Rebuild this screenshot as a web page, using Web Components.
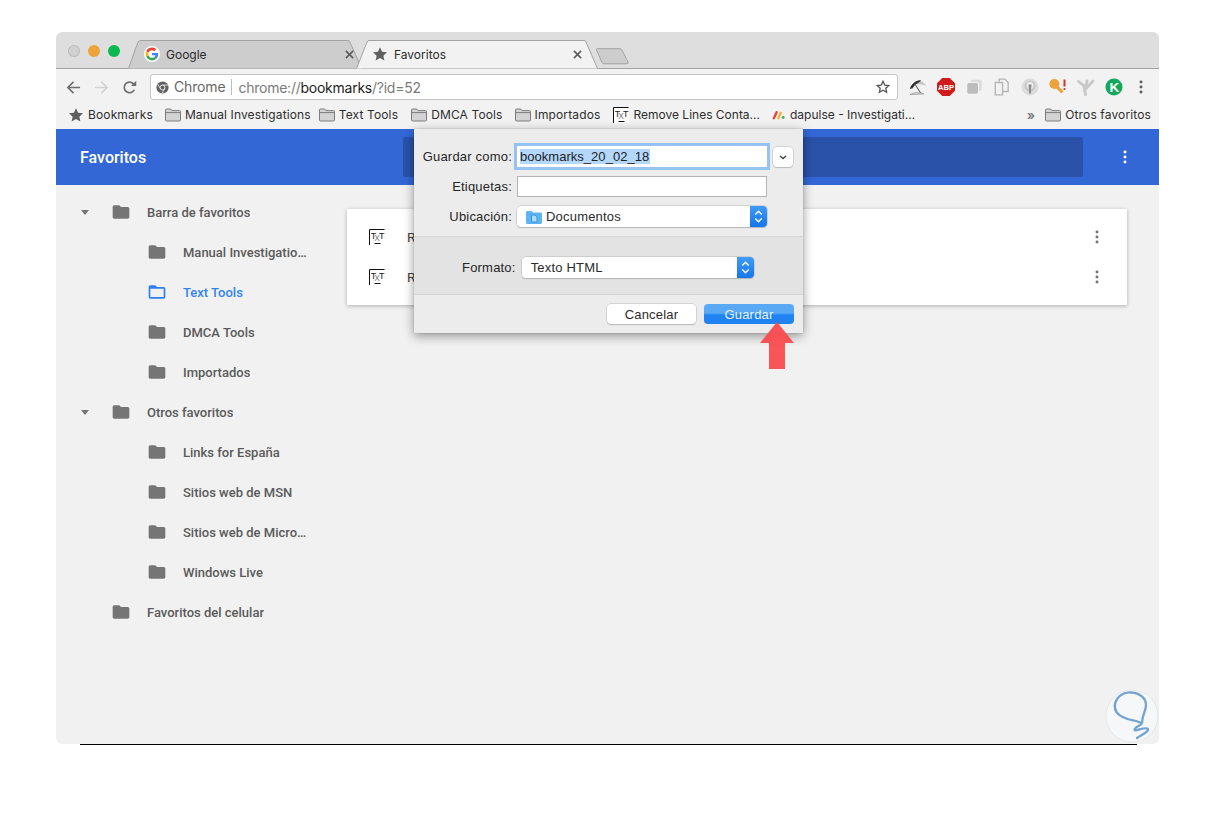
<!DOCTYPE html>
<html lang="es">
<head>
<meta charset="utf-8">
<title>Favoritos</title>
<style>
  html, body { margin: 0; background: #fff; }
  body { padding: 32px 56px 0; font-family: "Liberation Sans", sans-serif; }
</style>
</head>
<body>
<browser-window></browser-window>

<script>
const ICONS = {
    google: `<svg viewBox="-6 -6 60 60"><circle cx="24" cy="24" r="30" fill="#fff"/><path fill="#EA4335" d="M24 9.5c3.54 0 6.71 1.22 9.21 3.6l6.85-6.85C35.9 2.38 30.47 0 24 0 14.62 0 6.51 5.38 2.56 13.22l7.98 6.19C12.43 13.72 17.74 9.5 24 9.5z"/><path fill="#4285F4" d="M46.98 24.55c0-1.57-.15-3.09-.38-4.55H24v9.02h12.94c-.58 2.96-2.26 5.48-4.78 7.18l7.73 6c4.51-4.18 7.09-10.36 7.09-17.65z"/><path fill="#FBBC05" d="M10.53 28.59c-.48-1.45-.76-2.99-.76-4.59s.27-3.14.76-4.59l-7.98-6.19C.92 16.46 0 20.12 0 24c0 3.88.92 7.54 2.56 10.78l7.97-6.19z"/><path fill="#34A853" d="M24 48c6.48 0 11.93-2.13 15.89-5.81l-7.73-6c-2.15 1.45-4.92 2.3-8.16 2.3-6.26 0-11.57-4.22-13.47-9.91l-7.98 6.19C6.51 42.62 14.62 48 24 48z"/></svg>`,
    star: `<svg viewBox="0 0 24 24"><path fill="#5f5f5f" d="M12 1.8l3.1 6.9 7.4.8-5.5 5 1.6 7.4L12 18.1l-6.6 3.8L7 14.5l-5.5-5 7.4-.8z"/></svg>`,
    starOutline: `<svg viewBox="0 0 24 24"><path fill="none" stroke="#555" stroke-width="2" d="M12 3.5l2.6 5.6 6.1.7-4.5 4.1 1.2 6L12 16.9l-5.4 3 1.2-6-4.5-4.1 6.1-.7z"/></svg>`,
    close: `<svg viewBox="0 0 10 10"><path stroke="#5a5a5a" stroke-width="1.7" d="M1 1l8 8M9 1l-8 8"/></svg>`,
    back: `<svg viewBox="0 0 16 16"><path fill="none" stroke="#6e6e6e" stroke-width="1.7" d="M15 8H2M8 2L2 8l6 6"/></svg>`,
    forward: `<svg viewBox="0 0 16 16"><path fill="none" stroke="#d2d2d2" stroke-width="1.7" d="M1 8h13M8 2l6 6-6 6"/></svg>`,
    reload: `<svg viewBox="0 0 16 16"><path fill="none" stroke="#6e6e6e" stroke-width="1.8" d="M13.2 10.4A5.7 5.7 0 1 1 12.6 4.4"/><path fill="#6e6e6e" d="M9.6 6.4h5.6V.8z"/></svg>`,
    chrome: `<svg viewBox="0 0 16 16"><circle cx="8" cy="8" r="7.500" fill="#616161"/><circle cx="8" cy="8" r="3" fill="#616161" stroke="#f4f4f4" stroke-width="1.1"/><path stroke="#f4f4f4" stroke-width="1" d="M8 5h6.800M5.400 9.500L2 3.800M10.600 9.500l-3.400 6"/></svg>`,
    barFolder: `<svg viewBox="0 0 16 14"><path fill="#d3d3d3" stroke="#7c7c7c" d="M.5 12V2c0-.6.4-1 1-1h4.2l1.3 1.6h7.5c.6 0 1 .4 1 1V12c0 .6-.4 1-1 1h-13c-.6 0-1-.4-1-1z"/><path stroke="#7c7c7c" d="M.8 4.6h14.4"/></svg>`,
    txt: `<svg viewBox="0 0 16 16"><rect width="16" height="16" fill="#fff"/><path fill="none" stroke="#111" d="M.5 16V.5h15M5.500 14.500h6"/><text x="1.800" y="9.500" font-family="Liberation Sans" font-size="9" fill="#222">T</text><text x="5.200" y="12" font-family="Liberation Sans" font-size="8.500" fill="#777">X</text><text x="10" y="9.500" font-family="Liberation Sans" font-size="9" fill="#222">T</text></svg>`,
    dapulse: `<svg viewBox="0 0 14 10"><path stroke="#e8413f" stroke-width="2.600" stroke-linecap="round" d="M2 8.400L5 2"/><path stroke="#f2b632" stroke-width="2.600" stroke-linecap="round" d="M6.800 8.400L9.400 2.600"/><circle cx="12" cy="7.800" r="1.600" fill="#4fa968"/></svg>`,
    umbrella: `<svg viewBox="0 0 18 18"><path fill="#c4c4c4" d="M7 3.500l4-1.500 6.500 5.500C14 6.500 10 6.500 7 6z"/><path fill="#2f2f2f" d="M.8 11C2 6 7.500 1.500 12 2.200 11 4 8.500 5 6.800 6.500 5 8 4 9.500 3.400 10.500 2.600 10.300 1.600 10.500.8 11z"/><path stroke="#666" stroke-width="1.100" d="M6.500 7l5.500 8.500"/><path fill="#d8d8d8" stroke="#888" stroke-width=".6" d="M1 16.500c3-2 10-2.600 14-.5z"/></svg>`,
    abp: `<svg viewBox="0 0 18 18"><path fill="#d01b1b" d="M5.300 0h7.400L18 5.300v7.400L12.700 18H5.300L0 12.700V5.300z"/><text x="9" y="12" text-anchor="middle" font-family="Liberation Sans" font-weight="700" font-size="7.600" fill="#fff">ABP</text></svg>`,
    stack: `<svg viewBox="0 0 16 16"><rect x="5" y="1.500" width="10" height="10" rx="2" fill="#dcdcdc"/><rect x="1.500" y="4" width="10.500" height="10.500" rx="2" fill="#bcbcbc" stroke="#f2f2f2"/></svg>`,
    copy: `<svg viewBox="0 0 16 16"><path fill="#f2f2f2" stroke="#b5b5b5" stroke-width="1.200" d="M5.500 1h5l3 3v8h-8z"/><path fill="#f2f2f2" stroke="#b5b5b5" stroke-width="1.200" d="M2 4h6.500v11H2z"/></svg>`,
    bulb: `<svg viewBox="0 0 18 18"><circle cx="9" cy="9" r="8.500" fill="#dcdcdc"/><circle cx="9" cy="8" r="5.600" fill="#c8c8c8"/><circle cx="9" cy="7.500" r="3.400" fill="#eee"/><path fill="#8c8c8c" d="M7.400 6.500h3.200l-.6 5.500v3.500H8V12z"/></svg>`,
    key: `<svg viewBox="0 0 18 18"><circle cx="5.400" cy="6" r="5" fill="#eda33b"/><path stroke="#eda33b" stroke-width="3" d="M7 8l6.400 6.400M11 13l1.800-1.800"/><path stroke="#d8322c" stroke-width="2" d="M15.500 1.500v7"/><circle cx="15.500" cy="11" r="1.100" fill="#d8322c"/></svg>`,
    tree: `<svg viewBox="0 0 18 18"><path fill="none" stroke="#c9c9c9" stroke-width="2.900" stroke-linecap="round" d="M1.500 3.500L7 8l1.500 8.500M8.500 9c1-2 1-3.500 1.500-6M9 10.500L16 3"/></svg>`,
    kcircle: `<svg viewBox="0 0 18 18"><circle cx="9" cy="9" r="8.500" fill="#12a85c"/><text x="9.400" y="14" text-anchor="middle" font-family="Liberation Sans" font-weight="700" font-size="13.500" fill="#fff">K</text></svg>`,
    dots: `<svg viewBox="0 0 4 16"><circle cx="2" cy="2.200" r="1.700"/><circle cx="2" cy="8" r="1.700"/><circle cx="2" cy="13.800" r="1.700"/></svg>`,
    folderSolid: `<svg viewBox="0 0 24 24"><path fill="#757575" d="M10 4H4c-1.100 0-2 .9-2 2v12c0 1.100.9 2 2 2h16c1.100 0 2-.9 2-2V8c0-1.100-.9-2-2-2h-8l-2-2z"/></svg>`,
    folderOpen: `<svg viewBox="0 0 24 24"><path fill="#2f80ed" d="M20 6h-8l-2-2H4c-1.100 0-1.990.9-1.990 2L2 18c0 1.100.9 2 2 2h16c1.100 0 2-.9 2-2V8c0-1.100-.9-2-2-2zm0 12H4V8h16v10z"/></svg>`,
    docFolder: `<svg viewBox="0 0 16 14"><path fill="#5cb4f2" d="M0 2.500C0 1.600.6 1 1.500 1h4l1.500 1.500h7.500c.9 0 1.500.6 1.500 1.500v8.500c0 .9-.6 1.500-1.500 1.500h-13C.6 14 0 13.400 0 12.500z"/><path fill="#a8dbfa" stroke="#2f86d0" stroke-width=".8" d="M5.500 5h3.500l2 2v5H5.500z"/></svg>`
};

class AppIcon extends HTMLElement {
    connectedCallback() {
        const size = this.getAttribute('size') || 16;
        const height = this.getAttribute('height') || size;
        this.attachShadow({ mode: 'open' }).innerHTML = `
            <style>
                :host { display: inline-flex; flex: none; width: ${size}px; height: ${height}px; }
                svg { width: 100%; height: 100%; display: block; fill: currentColor; }
            </style>
            ${ICONS[this.getAttribute('name')]}
        `;
    }
}
customElements.define('app-icon', AppIcon);

class ChromeTab extends HTMLElement {
    connectedCallback() {
        const active = this.hasAttribute('active');
        const w = this.getAttribute('width');
        this.attachShadow({ mode: 'open' }).innerHTML = `
            <style>
                :host {
                    display: flex; align-items: center; flex: none; position: relative;
                    width: ${w}px; height: 28px; box-sizing: border-box; padding: 0 ${active ? 16 : 8}px 0 ${active ? 16 : 16}px;
                    font: 12px Inter, sans-serif; color: #2c2c2c; z-index: ${active ? 2 : 1};
                }
                svg.shape { position: absolute; left: 0; top: 0; width: 100%; height: 29px; }
                app-icon, span { position: relative; }
                span { flex: 1; margin-left: 6px; }
            </style>
            <svg class="shape" viewBox="0 0 ${w} 29" preserveAspectRatio="none">
                <path fill="${active ? '#f2f2f2' : '#cdcdcd'}" stroke="#a3a3a3" d="M0.500 28.500 L${active ? 11 : 10} 2 Q${active ? 11.500 : 10.500} 0.500 13 0.500 H${w - 14} Q${w - 12.500} 0.500 ${w - 12} 2 L${w - 0.500} 28.500"/>
            </svg>
            <app-icon name="${this.getAttribute('icon')}" size="16"></app-icon>
            <span><slot></slot></span>
            <app-icon name="close" size="9"></app-icon>
        `;
    }
}
customElements.define('chrome-tab', ChromeTab);

class TabStrip extends HTMLElement {
    connectedCallback() {
        this.attachShadow({ mode: 'open' }).innerHTML = `
            <style>
                :host {
                    display: flex; height: 37px; box-sizing: border-box; padding: 8px 0 0 72px;
                    background: #dedede; border-bottom: 1px solid #a3a3a3; border-radius: 6px 6px 0 0;
                }
                .lights { display: flex; gap: 8px; position: absolute; margin: 5px 0 0 -60px; }
                .lights i { width: 12px; height: 12px; border-radius: 50%; }
                chrome-tab + chrome-tab { margin-left: -6px; }
                .new { flex: none; width: 34px; height: 17px; margin: 8px 0 0 -3px; z-index: 0; }
                .new svg { display: block; width: 100%; height: 100%; }
            </style>
            <div class="lights">
                <i style="background:#d0d0d0;box-shadow:inset 0 0 0 1px #bdbdbd"></i>
                <i style="background:#eda339"></i>
                <i style="background:#0cb84f"></i>
            </div>
            <chrome-tab width="234" icon="google">Google</chrome-tab>
            <chrome-tab width="242" icon="star" active>Favoritos</chrome-tab>
            <div class="new"><svg viewBox="0 0 34 17"><path fill="#cdcdcd" stroke="#a3a3a3" d="M1.500 2 Q1 .7 2.500 .7 H25 Q26.200 .7 27 2 L33 14 Q33.500 15.800 32 15.800 H9 Q7.700 15.800 7 14.500 z"/></svg></div>
        `;
    }
}
customElements.define('tab-strip', TabStrip);

class OmniBox extends HTMLElement {
    connectedCallback() {
        this.attachShadow({ mode: 'open' }).innerHTML = `
            <style>
                :host {
                    display: flex; align-items: center; flex: none; box-sizing: border-box;
                    width: 748px; height: 26px; padding: 0 6px 0 5px; background: #fff;
                    border: 1px solid #c6c6c6; border-radius: 3px;
                    font: 14px Inter, sans-serif; letter-spacing: -.15px; color: #7a7a7a;
                }
                .chip { margin-left: 5px; padding-right: 6px; border-right: 1px solid #bdbdbd; line-height: 16px; color: #666; }
                .url { margin-left: 6px; flex: 1; white-space: nowrap; letter-spacing: -.25px; }
                b { font-weight: 400; color: #1d1d1d; }
            </style>
            <app-icon name="chrome" size="13"></app-icon>
            <span class="chip">Chrome</span>
            <span class="url">chrome://<b>bookmarks</b>/?id=52</span>
            <app-icon name="starOutline" size="16"></app-icon>
        `;
    }
}
customElements.define('omni-box', OmniBox);

class BrowserToolbar extends HTMLElement {
    connectedCallback() {
        const ext = ['umbrella', 'abp', 'stack', 'copy', 'bulb', 'key', 'tree', 'kcircle'];
        this.attachShadow({ mode: 'open' }).innerHTML = `
            <style>
                :host { display: flex; align-items: center; height: 32px; box-sizing: border-box; padding: 4px 0 0 10px; background: #f2f2f2; }
                .nav { display: flex; gap: 13px; width: 84px; flex: none; align-items: center; }
                .ext { display: flex; gap: 10px; margin-left: 11px; align-items: center; }
                .menu { margin-left: 16px; color: #5c5c5c; }
            </style>
            <div class="nav">
                <app-icon name="back" size="15"></app-icon>
                <app-icon name="forward" size="15"></app-icon>
                <app-icon name="reload" size="15"></app-icon>
            </div>
            <omni-box></omni-box>
            <div class="ext">${ext.map(n => `<app-icon name="${n}" size="18"></app-icon>`).join('')}</div>
            <app-icon class="menu" name="dots" size="4" height="14"></app-icon>
        `;
    }
}
customElements.define('browser-toolbar', BrowserToolbar);

class BmItem extends HTMLElement {
    connectedCallback() {
        const icon = this.getAttribute('icon') || 'barFolder';
        const h = this.getAttribute('icon-h') || 14;
        const w = this.getAttribute('icon-w') || 16;
        const gap = this.getAttribute('gap') || 4;
        this.attachShadow({ mode: 'open' }).innerHTML = `
            <style>
                :host { display: inline-flex; align-items: center; flex: none; gap: ${gap}px; white-space: nowrap; }
            </style>
            <app-icon name="${icon}" size="${w}" height="${h}"></app-icon>
            <slot></slot>
        `;
    }
}
customElements.define('bm-item', BmItem);

class BookmarksBar extends HTMLElement {
    connectedCallback() {
        this.attachShadow({ mode: 'open' }).innerHTML = `
            <style>
                :host {
                    display: flex; align-items: center; height: 28px; box-sizing: border-box; padding: 0 8px 1px 12px;
                    background: #f2f2f2; font: 12px Inter, sans-serif; letter-spacing: .13px; color: #2e2e2e;
                }
                .list { display: flex; align-items: center; gap: 12px; flex: 1; }
                .tight { margin-right: -4px; }
                .wide { margin-right: 13px; }
                .narrow { letter-spacing: 0; }
                .more { color: #777; margin-right: 10px; font-size: 13px; font-weight: 600; }
            </style>
            <div class="list">
                <bm-item icon="star" icon-w="16" icon-h="16">Bookmarks</bm-item>
                <bm-item class="tight">Manual Investigations</bm-item>
                <bm-item style="margin-right:1px">Text Tools</bm-item>
                <bm-item>DMCA Tools</bm-item>
                <bm-item style="margin-right:1px">Importados</bm-item>
                <bm-item class="narrow" icon="txt" icon-w="16" icon-h="16">Remove Lines Conta…</bm-item>
                <bm-item class="narrow" icon="dapulse" icon-w="13" icon-h="10" gap="5">dapulse - Investigati…</bm-item>
            </div>
            <span class="more">»</span>
            <bm-item>Otros favoritos</bm-item>
        `;
    }
}
customElements.define('bookmarks-bar', BookmarksBar);

class AppHeader extends HTMLElement {
    connectedCallback() {
        this.attachShadow({ mode: 'open' }).innerHTML = `
            <style>
                :host {
                    display: flex; align-items: center; height: 56px; flex: none;
                    background: #3367d6; color: #fff; font: 500 16px Roboto, sans-serif;
                }
                .title { width: 347px; padding-left: 24px; box-sizing: border-box; flex: none; }
                .search { width: 680px; height: 40px; background: #2a52a9; border-radius: 2px; flex: none; }
                app-icon { margin-left: 40px; }
            </style>
            <div class="title">Favoritos</div>
            <div class="search"></div>
            <app-icon name="dots" size="4" height="14"></app-icon>
        `;
    }
}
customElements.define('app-header', AppHeader);

class TreeRow extends HTMLElement {
    connectedCallback() {
        const depth = Number(this.getAttribute('depth') || 0);
        const selected = this.hasAttribute('selected');
        const open = this.hasAttribute('open');
        this.attachShadow({ mode: 'open' }).innerHTML = `
            <style>
                :host {
                    display: flex; align-items: center; height: 40px; box-sizing: border-box;
                    padding-left: ${20 + depth * 36}px; font: 500 13px Roboto, sans-serif;
                    color: ${selected ? '#3384f0' : '#5a5a5a'};
                }
                .arrow { width: 18px; margin-right: 17px; flex: none; display: flex; justify-content: center; }
                .arrow i { width: 0; height: 0; border: 4.500px solid transparent; border-top: 5px solid #757575; border-bottom: 0; visibility: ${open ? 'visible' : 'hidden'}; }
                .label { margin-left: 16px; max-width: 124px; overflow: hidden; white-space: nowrap; text-overflow: ellipsis; }
            </style>
            <div class="arrow"><i></i></div>
            <app-icon name="${selected ? 'folderOpen' : 'folderSolid'}" size="20"></app-icon>
            <div class="label"><slot></slot></div>
        `;
    }
}
customElements.define('tree-row', TreeRow);

class BookmarkCard extends HTMLElement {
    connectedCallback() {
        const row = `
            <div class="row">
                <app-icon name="txt" size="16"></app-icon>
                <span class="name">Remove</span>
                <app-icon class="menu" name="dots" size="4" height="14"></app-icon>
            </div>`;
        this.attachShadow({ mode: 'open' }).innerHTML = `
            <style>
                :host {
                    display: block; width: 780px; box-sizing: border-box; padding: 8px 0;
                    background: #fff; box-shadow: 0 1px 4px rgba(0,0,0,.28);
                    font: 13.5px Roboto, sans-serif; color: #444;
                }
                .row { display: flex; align-items: center; height: 40px; padding: 0 28px 0 22px; }
                .name { margin-left: 22px; flex: 1; }
                .menu { color: #757575; }
            </style>
            ${row}${row}
        `;
    }
}
customElements.define('bookmark-card', BookmarkCard);

class MacSelect extends HTMLElement {
    connectedCallback() {
        const w = this.getAttribute('width');
        const icon = this.getAttribute('icon');
        this.attachShadow({ mode: 'open' }).innerHTML = `
            <style>
                :host {
                    display: flex; align-items: center; box-sizing: border-box; flex: none; overflow: hidden;
                    width: ${w}px; height: 21px; background: #fff; border-radius: 4px;
                    box-shadow: 0 0 0 .5px #b8b8b8, 0 1px 1px rgba(0,0,0,.22);
                    font: 13px "Liberation Sans", sans-serif; color: #2b2b2b; letter-spacing: .2px;
                }
                .text { flex: 1; padding-left: ${icon ? 4 : 9}px; white-space: nowrap; }
                app-icon { margin-left: 9px; }
                .step { width: 17px; height: 100%; background: linear-gradient(#3f9bf7, #1676ea); flex: none; }
                .step svg { display: block; width: 100%; height: 100%; }
            </style>
            ${icon ? `<app-icon name="${icon}" size="16" height="14"></app-icon>` : ''}
            <span class="text"><slot></slot></span>
            <div class="step"><svg viewBox="0 0 17 21"><path fill="none" stroke="#fff" stroke-width="1.400" d="M5.300 8.500L8.500 5.300l3.200 3.200M5.300 12.500l3.200 3.200 3.200-3.200"/></svg></div>
        `;
    }
}
customElements.define('mac-select', MacSelect);

class MacButton extends HTMLElement {
    connectedCallback() {
        const primary = this.hasAttribute('primary');
        this.attachShadow({ mode: 'open' }).innerHTML = `
            <style>
                :host {
                    display: flex; align-items: center; justify-content: center; flex: none;
                    width: ${primary ? 90 : 89}px; height: 20px; border-radius: 4px; font: 13px "Liberation Sans", sans-serif; letter-spacing: .2px;
                    background: ${primary ? 'linear-gradient(#5aa9f5 0, #5aa9f5 45%, #1f84f2 55%, #1f84f2 100%)' : '#fff'};
                    color: ${primary ? '#e8f2fd' : '#2b2b2b'};
                    box-shadow: ${primary ? 'none' : '0 0 0 .5px #bcbcbc, 0 1px 1px rgba(0,0,0,.2)'};
                }
            </style>
            <slot></slot>
        `;
    }
}
customElements.define('mac-button', MacButton);

class SaveDialog extends HTMLElement {
    connectedCallback() {
        this.attachShadow({ mode: 'open' }).innerHTML = `
            <style>
                :host {
                    display: block; position: absolute; left: 358px; top: 97px; width: 389px; height: 204px;
                    background: #ececec; box-shadow: 0 3px 10px rgba(0,0,0,.4), 0 0 1px rgba(0,0,0,.3);
                    font: 13px "Liberation Sans", sans-serif; color: #262626; letter-spacing: .2px; z-index: 5;
                }
                .top { height: 108px; box-sizing: border-box; padding-top: 17px; border-bottom: 1px solid #d6d6d6; }
                .row { display: flex; align-items: center; margin-bottom: 9px; }
                .row label { width: 98px; text-align: right; margin-right: 5px; flex: none; white-space: nowrap; }
                .name {
                    box-sizing: border-box; width: 250px; height: 21px; padding-left: 3px; background: #fff; flex: none; line-height: 21px;
                    box-shadow: 0 0 0 .5px #9cc2ee, 0 0 0 3px #93c2f4; color: #222; letter-spacing: .03px;
                }
                .name span { background: #b3d7fd; padding-right: 1px; }
                .plain { box-sizing: border-box; width: 250px; height: 21px; background: #fff; border: 1px solid #b4b4b4; flex: none; }
                .expand {
                    width: 20px; height: 20px; margin-left: 6px; background: #fff; border-radius: 4px; flex: none;
                    box-shadow: 0 0 0 .5px #bcbcbc, 0 1px 1px rgba(0,0,0,.2);
                }
                .expand svg { display: block; width: 100%; height: 100%; }
                .mid {
                    display: flex; align-items: center; height: 58px; box-sizing: border-box; padding: 3px 0 0 48px;
                    background: #e3e3e3; border-bottom: 1px solid #d6d6d6;
                }
                .mid label { margin-right: 6px; }
                .foot { display: flex; justify-content: flex-end; gap: 8px; padding: 9px 9px 0 0; }
            </style>
            <div class="top">
                <div class="row">
                    <label>Guardar como:</label>
                    <div class="name"><span>bookmarks_20_02_18</span></div>
                    <div class="expand"><svg viewBox="0 0 20 20"><path fill="none" stroke="#444" stroke-width="1.400" d="M7 9l3 2.600L13 9"/></svg></div>
                </div>
                <div class="row">
                    <label>Etiquetas:</label>
                    <div class="plain"></div>
                </div>
                <div class="row">
                    <label>Ubicación:</label>
                    <mac-select width="250" icon="docFolder">Documentos</mac-select>
                </div>
            </div>
            <div class="mid">
                <label>Formato:</label>
                <mac-select width="232">Texto HTML</mac-select>
            </div>
            <div class="foot">
                <mac-button>Cancelar</mac-button>
                <mac-button primary>Guardar</mac-button>
            </div>
        `;
    }
}
customElements.define('save-dialog', SaveDialog);

class BrowserWindow extends HTMLElement {
    connectedCallback() {
        this.attachShadow({ mode: 'open' }).innerHTML = `
            <style>
                :host { display: block; width: 1103px; position: relative; }
                .frame {
                    height: 712px; display: flex; flex-direction: column; overflow: hidden;
                    background: #f1f1f1; border-radius: 6px;
                }
                .body { display: flex; flex: 1; }
                .tree { width: 291px; flex: none; padding-top: 7px; }
                .main { padding-top: 24px; }
                .line { height: 1px; margin: 0 22px 0 24px; background: #000; }
                .arrow { position: absolute; left: 703px; top: 290px; width: 36px; height: 47px; z-index: 6; }
                .mark { position: absolute; left: 1049px; top: 656px; width: 54px; height: 56px; overflow: hidden; z-index: 6; }
                svg { display: block; }
            </style>
            <div class="frame">
                <tab-strip></tab-strip>
                <browser-toolbar></browser-toolbar>
                <bookmarks-bar></bookmarks-bar>
                <app-header></app-header>
                <div class="body">
                    <div class="tree">
                        <tree-row open>Barra de favoritos</tree-row>
                        <tree-row depth="1">Manual Investigations</tree-row>
                        <tree-row depth="1" selected>Text Tools</tree-row>
                        <tree-row depth="1">DMCA Tools</tree-row>
                        <tree-row depth="1">Importados</tree-row>
                        <tree-row open>Otros favoritos</tree-row>
                        <tree-row depth="1">Links for España</tree-row>
                        <tree-row depth="1">Sitios web de MSN</tree-row>
                        <tree-row depth="1">Sitios web de Microsoft</tree-row>
                        <tree-row depth="1">Windows Live</tree-row>
                        <tree-row>Favoritos del celular</tree-row>
                    </div>
                    <div class="main"><bookmark-card></bookmark-card></div>
                </div>
            </div>
            <div class="line"></div>
            <save-dialog></save-dialog>
            <svg class="arrow" viewBox="0 0 36 47">
                <path fill="#f9494c" fill-opacity=".94" d="M18 0L35 21H26V47H10V21H1z"/>
            </svg>
            <svg class="mark" viewBox="0 0 54 56">
                <circle cx="27" cy="28" r="26" fill="#f6f7f8" stroke="#e6e8ea" stroke-width="1"/>
                <path fill="none" stroke="#74a3d1" stroke-width="2.300" stroke-linecap="round" stroke-linejoin="round" d="M36.500 35.500C32 32 26 33 20 30 12 27 9 22 10 16 12 8 19 4 26 4.500 35 5 41 10 41 17 41 23 37 27 37 35 36 38 29 39 29.500 42 30 44 41 38 43 41 44 44 36 47 32 50"/>
            </svg>
        `;
    }
}
customElements.define('browser-window', BrowserWindow);
</script>
</body>
</html>
